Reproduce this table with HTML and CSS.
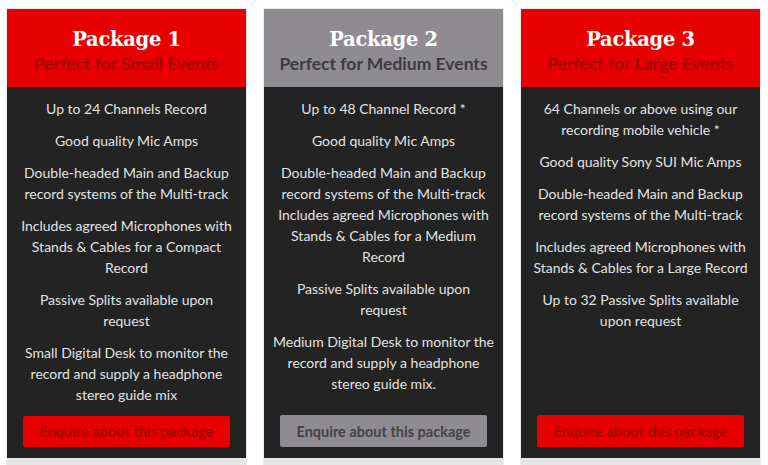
FILE: index.html
```html
<!DOCTYPE html>
<html>
<head>
<meta charset="utf-8">
<link rel="stylesheet" href="styles.css">
</head>
<body>
<div class="packages">
  <div class="card red">
    <div class="head">
      <h2>Package 1</h2>
      <h3>Perfect for Small Events</h3>
    </div>
    <div class="body">
      <p>Up to 24 Channels Record</p>
      <p>Good quality Mic Amps</p>
      <p>Double-headed Main and Backup record systems of the Multi-track</p>
      <p>Includes agreed Microphones with Stands &amp; Cables for a Compact Record</p>
      <p>Passive Splits available upon<br>request</p>
      <p>Small Digital Desk to monitor the record and supply a headphone stereo guide mix</p>
      <a class="btn">Enquire about this package</a>
    </div>
    <div class="foot"></div>
  </div>
  <div class="card grey">
    <div class="head">
      <h2>Package 2</h2>
      <h3>Perfect for Medium Events</h3>
    </div>
    <div class="body">
      <p>Up to 48 Channel Record *</p>
      <p>Good quality Mic Amps</p>
      <p>Double-headed Main and Backup record systems of the Multi-track<br>Includes agreed Microphones with Stands &amp; Cables for a Medium Record</p>
      <p>Passive Splits available upon<br>request</p>
      <p><span class="nw">Medium Digital Desk to monitor the</span> record and supply a headphone stereo guide mix.</p>
      <a class="btn">Enquire about this package</a>
    </div>
    <div class="foot"></div>
  </div>
  <div class="card red">
    <div class="head">
      <h2>Package 3</h2>
      <h3>Perfect for Large Events</h3>
    </div>
    <div class="body">
      <p>64 Channels or above using our recording mobile vehicle *</p>
      <p>Good quality Sony SUI Mic Amps</p>
      <p>Double-headed Main and Backup record systems of the Multi-track</p>
      <p>Includes agreed Microphones with Stands &amp; Cables for a Large Record</p>
      <p>Up to 32 Passive Splits available upon request</p>
      <a class="btn">Enquire about this package</a>
    </div>
    <div class="foot"></div>
  </div>
</div>
</body>
</html>
```
FILE: styles.css
```css
html, body {
  margin: 0;
  padding: 0;
  background: #ffffff;
}
.packages {
  display: flex;
  gap: 18px;
  padding: 9px 0 0 7px;
  align-items: stretch;
}
.card {
  width: 239px;
  display: flex;
  flex-direction: column;
  box-shadow: 0 0 1px 0 rgba(0,0,0,0.45);
}
.head {
  height: 78px;
  box-sizing: border-box;
  padding-top: 18px;
  text-align: center;
}
.red .head { background: #e60000; }
.grey .head { background: #8e8b91; }
.head h2 {
  margin: 0;
  font-family: "DejaVu Serif", serif;
  font-weight: bold;
  font-size: 19.5px;
  line-height: 26px;
  color: #ffffff;
  letter-spacing: -0.3px;
}
.head h3 {
  margin: 0;
  font-family: "Lato", sans-serif;
  font-weight: 700;
  font-size: 17.5px;
  line-height: 22px;
}
.red .head h3 { color: #a80000; }
.grey .head h3 { color: #3d3b3f; }
.body {
  flex: none;
  height: 371px;
  box-sizing: border-box;
  background: #232323;
  padding: 11px 7px 11px;
  display: flex;
  flex-direction: column;
  align-items: stretch;
}
.body p {
  margin: 0 0 11px;
  font-family: "Lato", sans-serif;
  font-size: 14px;
  line-height: 21px;
  color: #e2e2e2;
  text-align: center;
}
.nw { white-space: nowrap; }
.btn {
  margin: auto 9px 0;
  height: 32px;
  border-radius: 2px;
  display: flex;
  align-items: center;
  justify-content: center;
  font-family: "Lato", sans-serif;
  font-weight: 700;
  font-size: 14.5px;
}
.red .btn { background: #e60000; color: #a80000; }
.grey .btn { background: #8e8b91; color: #444246; }
.foot {
  height: 12px;
  background: #e6e6e6;
}
```
